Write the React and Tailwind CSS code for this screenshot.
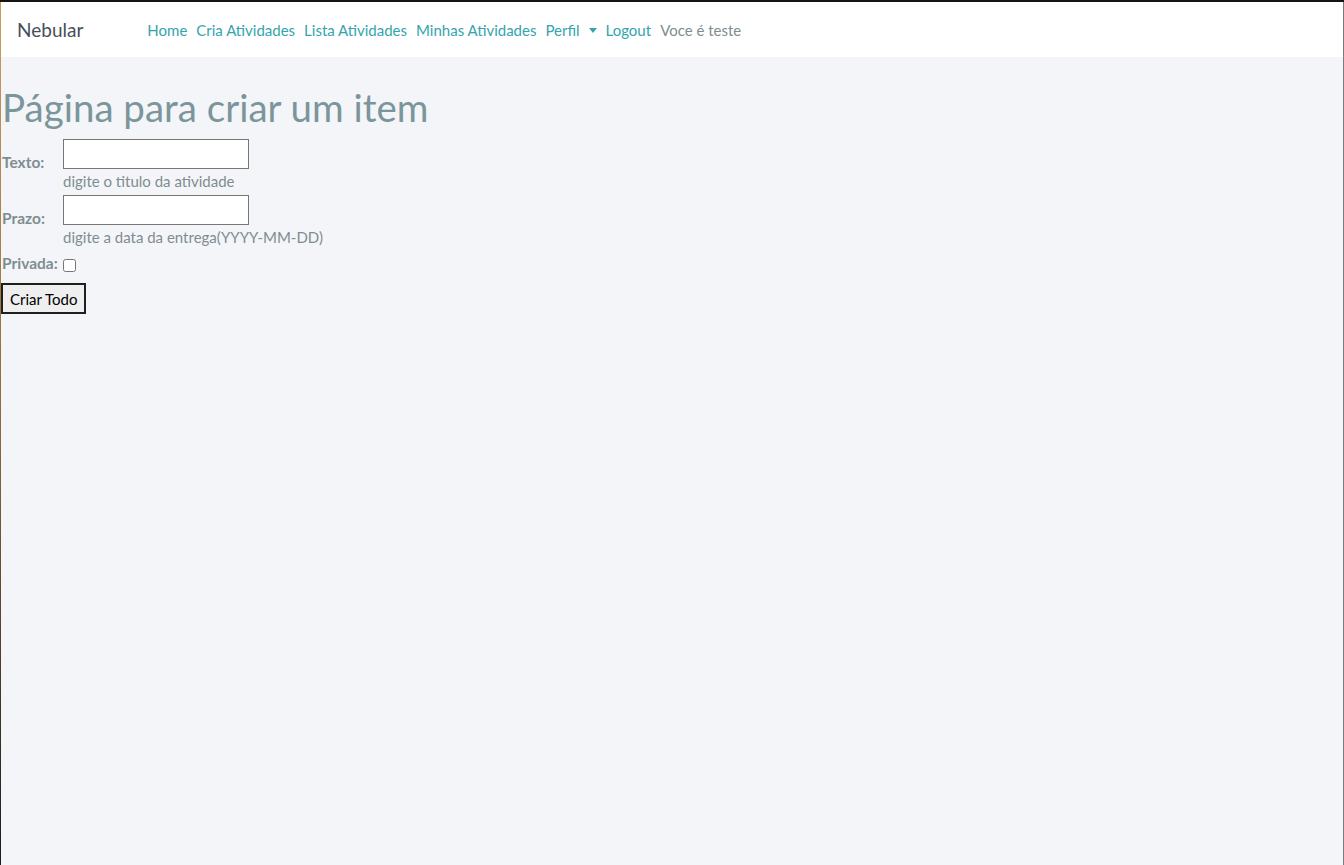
import React from 'react';

const navLinks = ['Home', 'Cria Atividades', 'Lista Atividades', 'Minhas Atividades'];

const Field = ({ label, hint }) => (
  <div className="flex items-center">
    <label className="w-[61px] shrink-0 mb-[5px] text-[15.5px] font-bold text-[#7f8d91]">{label}</label>
    <div className="flex flex-col">
      <input type="text" className="w-[186px] h-[30px] bg-white border border-[#767676] outline-none" />
      <span className="mt-[2px] text-[15px] leading-[20px] text-[#7f8d91]">{hint}</span>
    </div>
  </div>
);

const App = () => {
  return (
    <div
      className="h-[865px] w-[1344px] overflow-hidden flex bg-[#f4f5f9] border-t-2 border-[#17140f]"
      style={{ fontFamily: 'Lato, "Liberation Sans", sans-serif' }}
    >
      <div className="w-px shrink-0 bg-gradient-to-b from-[#c99f5c] via-[#8a6a3a] to-[#1b1b1b]" />
      <div className="flex-1 flex flex-col">
        <nav className="h-[55px] bg-white flex items-center pl-[16px] pt-[2px]">
          <span className="text-[19px] text-[#474e57] mr-[64px]">Nebular</span>
          <div className="flex items-center gap-[9px] text-[15px] text-[#34a4ad]">
            {navLinks.map((l) => (
              <a key={l} href="#" className="hover:underline">{l}</a>
            ))}
            <a href="#" className="flex items-center">
              Perfil
              <span className="ml-[9px] w-0 h-0 border-l-[4px] border-r-[4px] border-t-[5px] border-l-transparent border-r-transparent border-t-[#34a4ad]" />
            </a>
            <a href="#">Logout</a>
            <span className="text-[#7f8d91]">Voce é teste</span>
          </div>
        </nav>
        <main className="pt-[26px]">
          <h1 className="pl-[1px] text-[38.5px] leading-[48px] text-[#7b969b] mb-[8px]">Página para criar um item</h1>
          <div className="pl-[1px] flex flex-col gap-[4px]">
            <Field label="Texto:" hint="digite o titulo da atividade" />
            <Field label="Prazo:" hint="digite a data da entrega(YYYY-MM-DD)" />
            <div className="flex items-center mt-[1px]">
              <label className="w-[61px] shrink-0 text-[15.5px] font-bold text-[#7f8d91]">Privada:</label>
              <input type="checkbox" className="w-[13px] h-[13px] m-0 mt-[4px]" />
            </div>
          </div>
          <button className="mt-[8px] h-[31px] px-[7px] bg-[#efefef] border-2 border-[#1f1f1f] text-[15px] text-black">
            Criar Todo
          </button>
        </main>
      </div>
      <div className="w-px shrink-0 bg-[#7a7a7a]" />
    </div>
  );
};

export default App;
